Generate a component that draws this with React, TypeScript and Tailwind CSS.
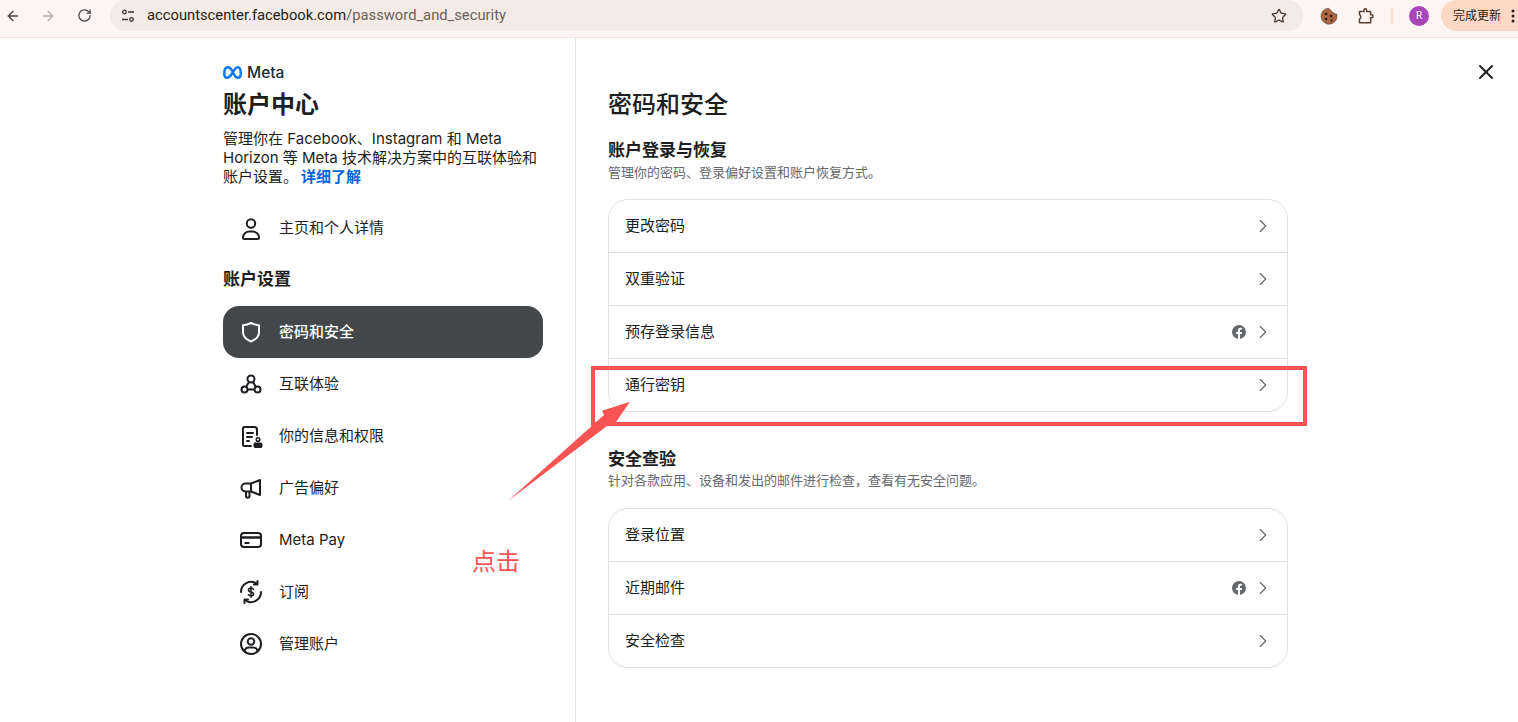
import { ArrowLeft, ArrowRight, ChevronRight, RotateCw, Star, X } from "lucide-react";

const FONT = "font-['Inter','Noto_Sans_CJK_SC',sans-serif]";

// nav icons, stroke drawn on a 24 box
const UserIcon = () => (
    <svg width="24" height="24" viewBox="0 0 24 24" fill="none" stroke="currentColor" strokeWidth="2">
        <circle cx="12" cy="7.500" r="4.200" />
        <path d="M5.500 23c-.9 0-1.500-.6-1.500-1.500C4 18 7 15.500 10.500 15.500h3C17 15.500 20 18 20 21.500c0 .9-.6 1.500-1.500 1.500z" />
    </svg>
);
const ShieldIcon = () => (
    <svg width="24" height="24" viewBox="0 0 24 24" fill="none" stroke="currentColor" strokeWidth="2" strokeLinejoin="round">
        <path d="M12 3c3 1.500 5.500 2 8 2.200V12c0 4.500-3 7.500-8 9.500-5-2-8-5-8-9.500V5.200C6.500 5 9 4.500 12 3z" />
    </svg>
);
const ConnectIcon = () => (
    <svg width="24" height="24" viewBox="0 0 24 24" fill="none" stroke="currentColor" strokeWidth="2">
        <circle cx="12" cy="7" r="3.500" />
        <circle cx="5.500" cy="17.500" r="3" />
        <circle cx="18.500" cy="17.500" r="3" />
        <path d="M8.500 17.500h7M10 10l-3 5M14 10l3 5" />
    </svg>
);
const InfoLockIcon = () => (
    <svg width="24" height="24" viewBox="0 0 24 24" fill="none" stroke="currentColor" strokeWidth="2" strokeLinecap="round">
        <path d="M12 22H5.500C4.600 22 4 21.400 4 20.500v-16C4 3.600 4.600 3 5.500 3h10C17 3 18 4 18 5.500V11" />
        <path d="M8 9h6M8 13h5M8 17h2" />
        <rect x="15" y="19" width="8" height="4.500" rx="1" fill="currentColor" strokeWidth="1" />
        <circle cx="19" cy="15.500" r="1.800" strokeWidth="1.500" />
    </svg>
);
const MegaphoneIcon = () => (
    <svg width="24" height="24" viewBox="0 0 24 24" fill="none" stroke="currentColor" strokeWidth="2" strokeLinejoin="round">
        <path d="M21 4v15l-9-3.500H6.500a4 4 0 0 1 0-8H12L21 4z" />
        <path d="M12 7.500v8M7 15.500V20c0 1 .7 1.700 1.700 1.700S10.500 21 10.500 20v-4.500" />
    </svg>
);
const CardIcon = () => (
    <svg width="24" height="24" viewBox="0 0 24 24" fill="none" stroke="currentColor" strokeWidth="2">
        <rect x="2" y="5" width="20" height="14" rx="3" />
        <path d="M2 9.500h20" strokeWidth="2.500" />
        <path d="M5.500 15h5" />
    </svg>
);
const SubscribeIcon = () => (
    <svg width="24" height="24" viewBox="0 0 24 24" fill="none" stroke="currentColor" strokeWidth="2" strokeLinecap="round" strokeLinejoin="round">
        <path d="M2 12A10 10 0 0 1 17.500 3.600M22 12A10 10 0 0 1 6.500 20.400" />
        <path d="M18.500 1v3.500H15M5.500 23v-3.500H9" />
        <path d="M14.500 9.300c-.5-.8-1.400-1.300-2.500-1.300-1.400 0-2.500.8-2.500 2s1 1.700 2.500 2 2.500.8 2.500 2-1.100 2-2.500 2c-1.100 0-2-.5-2.500-1.300M12 6.800v10.400" strokeWidth="1.600" />
    </svg>
);
const AccountIcon = () => (
    <svg width="24" height="24" viewBox="0 0 24 24" fill="none" stroke="currentColor" strokeWidth="2">
        <circle cx="12" cy="12" r="10" />
        <circle cx="12" cy="9.500" r="3.300" />
        <path d="M5.500 19c.6-2.500 2.500-3.500 4.500-3.500h4c2 0 3.900 1 4.500 3.500" />
    </svg>
);

const FacebookBadge = () => (
    <svg width="14" height="14" viewBox="0 0 24 24">
        <path fill="#65686c" d="M24 12a12 12 0 1 0-13.900 11.900v-8.400H7.100V12h3V9.400c0-3 1.800-4.700 4.500-4.700 1.300 0 2.700.2 2.700.2v3h-1.500c-1.500 0-2 .9-2 1.900V12h3.400l-.5 3.500h-2.900v8.400A12 12 0 0 0 24 12z" />
    </svg>
);

const navItems = [
    { label: "密码和安全", icon: <ShieldIcon />, active: true },
    { label: "互联体验", icon: <ConnectIcon /> },
    { label: "你的信息和权限", icon: <InfoLockIcon /> },
    { label: "广告偏好", icon: <MegaphoneIcon /> },
    { label: "Meta Pay", icon: <CardIcon /> },
    { label: "订阅", icon: <SubscribeIcon /> },
    { label: "管理账户", icon: <AccountIcon /> },
];

const NavRow = ({ label, icon, active }: { label: string; icon: React.ReactNode; active?: boolean }) => (
    <div className={`${active ? "bg-[#44474a] text-white font-medium" : "text-[#1c1e21]"} flex h-[52px] items-center gap-4 rounded-[16px] pl-4 text-[15px]`}>
        {icon}
        <span>{label}</span>
    </div>
);

const CardList = ({ rows }: { rows: { label: string; fb?: boolean }[] }) => (
    <div className="w-[680px] rounded-[20px] border border-[#dfe1e5] divide-y divide-[#dfe1e5]">
        {rows.map((row) => (
            <div key={row.label} className="flex h-[53px] last:h-[52px] items-center justify-between pl-4 pr-[13px] text-[15px] text-[#1c1e21]">
                <span>{row.label}</span>
                <div className="flex items-center gap-[6px]">
                    {row.fb && <FacebookBadge />}
                    <ChevronRight size={22} strokeWidth={1.2} className="text-[#5f6368]" />
                </div>
            </div>
        ))}
    </div>
);

const BrowserBar = () => (
    <header className="flex h-[38px] shrink-0 items-start border-b border-[#f8e2db] bg-[#fff6f3]">
        <div className="flex h-[31px] w-[110px] shrink-0 items-center text-[#4d3f38]">
            <ArrowLeft size={16} className="ml-[5px]" />
            <ArrowRight size={16} className="ml-[19px] text-[#b5aaa5]" />
            <RotateCw size={15} className="ml-[21px]" />
        </div>
        <div className="flex h-[31px] w-[1193px] shrink-0 items-center rounded-[16px] bg-[#f5eae6] pl-[10px] pr-[16px]">
            <svg width="16" height="16" viewBox="0 0 16 16" fill="none" stroke="#3f3531" strokeWidth="1.300">
                <circle cx="4.500" cy="4" r="1.800" />
                <path d="M8 4h6M2 11.500h6" />
                <circle cx="11.500" cy="11.500" r="1.800" />
            </svg>
            <span className="ml-[11px] font-['Roboto',sans-serif] text-[14.75px] text-[#241d1a]">
                accountscenter.facebook.com<span className="text-[#6a5f5a]">/password_and_security</span>
            </span>
            <Star size={16} className="ml-auto text-[#4d3f38]" />
        </div>
        <div className="flex h-[31px] flex-1 items-center">
            <svg width="18" height="18" viewBox="0 0 18 18" className="ml-[17px]">
                <path fill="#a9683f" stroke="#5a3a28" strokeWidth=".6" d="M9 1.200c.4 1.500 1.200 2 2.200 2 .1 1.500 1.200 2.500 2.500 2.300.2 1 1.200 1.600 3 1.500A8 8 0 1 1 9 1.200z" />
                <circle cx="6" cy="7" r="1.300" fill="#2d1c12" />
                <circle cx="11" cy="9" r="1.300" fill="#2d1c12" />
                <circle cx="6" cy="12" r="1.300" fill="#2d1c12" />
                <circle cx="11.500" cy="13.500" r="1.100" fill="#2d1c12" />
            </svg>
            <svg width="16" height="16" viewBox="0 0 16 16" fill="none" stroke="#5a4030" strokeWidth="1.500" strokeLinejoin="round" className="ml-[20px]">
                <path d="M1.500 3.500H6V2a1.300 1.300 0 0 1 2.600 0v1.500h4v3.200h1a1.500 1.500 0 0 1 0 3h-1v5H1.500v-3.500a2.800 2.800 0 0 0 0-4.700V3.500z" />
            </svg>
            <div className="ml-[17px] h-[16px] w-[2px] bg-[#fbdccf]" />
            <div className="ml-[16px] flex h-[20px] w-[20px] items-center justify-center rounded-full bg-[#a845b8] font-['Roboto',sans-serif] text-[10px] text-white">R</div>
            <div className="ml-[12px] flex h-[31px] flex-1 items-center rounded-l-[16px] bg-[#fdd9c5] pl-[12px] text-[12px] text-[#2b1d16]">
                <span className="whitespace-nowrap">完成更新</span>
                <svg width="4" height="14" viewBox="0 0 4 14" className="ml-[10px] shrink-0" fill="#2b1d16">
                    <circle cx="2" cy="2" r="1.500" />
                    <circle cx="2" cy="7" r="1.500" />
                    <circle cx="2" cy="12" r="1.500" />
                </svg>
            </div>
        </div>
    </header>
);

export default function App() {
    return (
        <div className={`${FONT} relative flex h-[722px] w-[1518px] flex-col overflow-hidden bg-white`}>
            <BrowserBar />

            <div className="flex flex-1">
                {/* left column */}
                <aside className="w-[576px] shrink-0 border-r border-[#e4e6e9] pl-[223px] pr-[32px] pt-[26px]">
                    <div className="flex h-[16px] items-center gap-[5px]">
                        <svg width="19" height="13" viewBox="0 0 38 26" fill="none" stroke="#0a78f0" strokeWidth="5">
                            <path d="M19 10C16 5.500 13 2.500 9.500 2.500 5 2.500 2.500 8 2.500 15c0 5 2.300 8.500 6 8.500 4.500 0 7.500-5 10.500-10 3.500-6 6.500-11 10.500-11 4.500 0 6 5.500 6 12.500 0 5-2.300 8.500-6 8.500-4.500 0-7.500-5.500-10.500-13.500z" />
                        </svg>
                        <span className="pt-[1px] text-[15.5px] font-medium leading-none text-[#1c2b33]">Meta</span>
                    </div>
                    <h1 className="mt-[9px] text-[24px] font-bold leading-[32px] text-[#1c1e21]">账户中心</h1>
                    <p className="mt-[8px] text-[15px] leading-[19px] text-[#1c1e21]">
                        管理你在 Facebook、Instagram 和 Meta Horizon 等 Meta 技术解决方案中的互联体验和账户设置。
                        <a className="ml-[3px] font-bold text-[#0064e0]">详细了解</a>
                    </p>
                    <div className="mt-[16px] text-[#1c1e21]">
                        <NavRow label="主页和个人详情" icon={<UserIcon />} />
                    </div>
                    <h2 className="flex h-[52px] items-center text-[17px] font-bold text-[#1c1e21]">账户设置</h2>
                    <nav className="flex flex-col">
                        {navItems.map((item) => (
                            <NavRow key={item.label} {...item} />
                        ))}
                    </nav>
                </aside>

                {/* right column */}
                <main className="pl-[32px] pt-[51px]">
                    <h1 className="text-[24px] font-medium leading-[32px] text-[#1c1e21]">密码和安全</h1>
                    <h2 className="mt-[17px] text-[17px] font-bold leading-[24px] text-[#1c1e21]">账户登录与恢复</h2>
                    <p className="mb-[19px] mt-[2px] text-[13px] leading-[16px] text-[#65686c]">管理你的密码、登录偏好设置和账户恢复方式。</p>
                    <CardList rows={[{ label: "更改密码" }, { label: "双重验证" }, { label: "预存登录信息", fb: true }, { label: "通行密钥" }]} />
                    <h2 className="mt-[35px] text-[17px] font-bold leading-[24px] text-[#1c1e21]">安全查验</h2>
                    <p className="mb-[20px] mt-[1px] text-[13px] leading-[16px] text-[#65686c]">针对各款应用、设备和发出的邮件进行检查，查看有无安全问题。</p>
                    <CardList rows={[{ label: "登录位置" }, { label: "近期邮件", fb: true }, { label: "安全检查" }]} />
                </main>
            </div>

            {/* close */}
            <button className="absolute left-[1474px] top-[60px] text-[#1c1e21]">
                <X size={24} strokeWidth={2} />
            </button>

            {/* red annotations on top of the screenshot */}
            <div className="absolute left-[591px] top-[366px] h-[60px] w-[716px] border-4 border-[#f95454]" />
            <svg className="absolute left-[500px] top-[390px]" width="140" height="115" viewBox="0 0 140 115">
                <path fill="#f95454" d="M8 111L104 25 102 20.700 130 11.700 116 32 107 36z" />
            </svg>
            <span className="absolute left-[472px] top-[546px] text-[24px] leading-[32px] text-[#f95454]">点击</span>
        </div>
    );
}
